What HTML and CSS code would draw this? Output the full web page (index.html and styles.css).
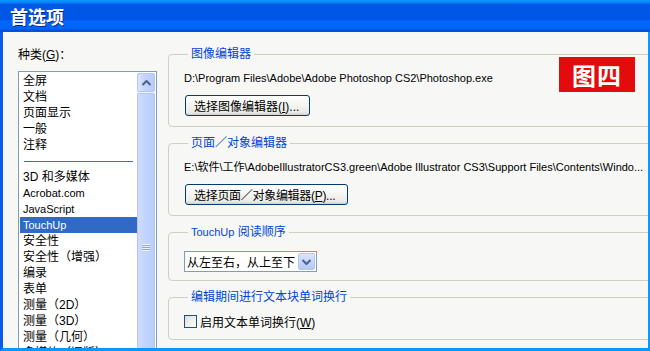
FILE: index.html
```html
<!DOCTYPE html>
<html lang="zh-CN">
<head>
    <meta charset="UTF-8">
    <meta name="viewport" content="width=device-width, initial-scale=1.0">
    <title>首选项</title>
    <link rel="stylesheet" href="styles.css">
</head>
<body>
    <div class="window">
        <div class="titlebar">首选项</div>

        <div class="frame">
            <div class="sidebar">
                <div class="caption">种类(<u>G</u>)：</div>
                <div class="listbox">
                    <ul class="items">
                        <li>全屏</li>
                        <li>文档</li>
                        <li>页面显示</li>
                        <li>一般</li>
                        <li>注释</li>
                        <li class="sep"></li>
                        <li>3D 和多媒体</li>
                        <li class="lat">Acrobat.com</li>
                        <li class="lat">JavaScript</li>
                        <li class="lat selected">TouchUp</li>
                        <li>安全性</li>
                        <li>安全性（增强）</li>
                        <li>编录</li>
                        <li>表单</li>
                        <li>测量（2D）</li>
                        <li>测量（3D）</li>
                        <li>测量（几何）</li>
                        <li>多媒体（旧版）</li>
                    </ul>
                    <div class="scrollbar">
                        <div class="sb-up">
                            <svg width="9" height="6" viewBox="0 0 9 6"><path d="M0.5 5 L4.5 1 L8.5 5" fill="none" stroke="#4d6185" stroke-width="2"/></svg>
                        </div>
                        <div class="sb-thumb">
                            <span class="grip"></span>
                        </div>
                    </div>
                </div>
            </div>

            <div class="panel">
                <fieldset class="group">
                    <legend>图像编辑器</legend>
                    <div class="path">D:\Program Files\Adobe\Adobe Photoshop CS2\Photoshop.exe</div>
                    <button class="btn w1">选择图像编辑器(<u>I</u>)...</button>
                </fieldset>

                <fieldset class="group">
                    <legend>页面／对象编辑器</legend>
                    <div class="path">E:\软件\工作\AdobeIllustratorCS3.green\Adobe Illustrator CS3\Support Files\Contents\Windo...</div>
                    <button class="btn w2">选择页面／对象编辑器(<u>P</u>)...</button>
                </fieldset>

                <fieldset class="group g3">
                    <legend><span class="lat">TouchUp</span> 阅读顺序</legend>
                    <div class="combo">
                        <span class="combo-text">从左至右，从上至下</span>
                        <span class="combo-btn">
                            <svg width="9" height="6" viewBox="0 0 9 6"><path d="M0.5 1 L4.5 5 L8.5 1" fill="none" stroke="#4d6185" stroke-width="2"/></svg>
                        </span>
                    </div>
                </fieldset>

                <fieldset class="group">
                    <legend>编辑期间进行文本块单词换行</legend>
                    <label class="check">
                        <span class="box"></span>
                        <span>启用文本单词换行(<u>W</u>)</span>
                    </label>
                </fieldset>
            </div>
        </div>

        <div class="stamp">图四</div>
    </div>
</body>
</html>
```

FILE: styles.css
```css
* {
    box-sizing: border-box;
}
body {
    margin: 0;
    font-family: "Liberation Sans", "Noto Sans CJK SC", sans-serif;
    font-size: 12px;
    color: #000;
    background: #f7f7f5;
}
.window {
    position: relative;
    width: 650px;
    height: 351px;
    display: flex;
    flex-direction: column;
    overflow: hidden;
}
.titlebar {
    height: 32px;
    flex-shrink: 0;
    padding-left: 10px;
    line-height: 33px;
    font-family: "Noto Sans CJK SC", sans-serif;
    font-size: 18px;
    font-weight: bold;
    color: #fff;
    text-shadow: 1px 1px 0 #0a2a8a;
    background: linear-gradient(to bottom, #0a97ff 0, #0a80f6 3px, #0059e7 4px, #0055e5 20px, #0066fb 21px, #0064f6 29px, #0050dc 30px, #0050dc 32px);
}
.frame {
    flex: 1;
    display: flex;
    min-height: 0;
    border-left: 3px solid #0a5ce8;
    border-right: 2px solid #0a98ff;
    border-bottom: 3px solid #0a98ff;
    background: #f7f7f5;
    overflow: hidden;
}

/* categories list */
.sidebar {
    width: 165px;
    flex-shrink: 0;
    padding: 15px 0 0 15px;
}
.caption {
    height: 16px;
    line-height: 16px;
}
.listbox {
    margin-top: 8px;
    width: 139px;
    height: 300px;
    padding: 1px;
    border: 1px solid #7f9db9;
    background: #fff;
    display: grid;
    grid-template-columns: 117px 18px;
}
.items {
    list-style: none;
    margin: 0;
    padding: 0;
}
.items li {
    height: 16px;
    line-height: 16px;
    padding-left: 3px;
    white-space: nowrap;
}
.items li.lat {
    font-size: 11px;
}
.items li.selected {
    background: #316ac5;
    color: #fff;
}
.items li.sep {
    position: relative;
}
.items li.sep::after {
    content: "";
    position: absolute;
    left: 4px;
    right: 4px;
    top: 8px;
    border-top: 1px solid #3c6bb8;
}
.scrollbar {
    display: flex;
    flex-direction: column;
    background: #eef3fe;
}
.sb-up {
    height: 19px;
    display: flex;
    align-items: center;
    justify-content: center;
    background: linear-gradient(to right, #dce6fe, #c4d4fc 40%, #b9cbfa);
    border: 1px solid #b3c7f6;
    border-radius: 2px;
}
.sb-thumb {
    flex: 1;
    margin-top: 1px;
    display: flex;
    justify-content: center;
    padding-top: 150px;
    background: linear-gradient(to right, #cfdcfd, #c4d4fd 40%, #bacdfb);
    border: 1px solid #b3c7f6;
    border-radius: 2px;
}
.grip {
    width: 8px;
    height: 7px;
    background: repeating-linear-gradient(to bottom, #eef3fe 0 1px, #8ba4e0 1px 2px);
}

/* right side groups */
.panel {
    flex: 1;
    min-width: 0;
    padding-top: 14px;
    display: flex;
    flex-direction: column;
    gap: 8px;
    overflow: hidden;
}
.group {
    margin: 0 -12px 0 0;
    padding: 0 0 10px 15px;
    border: 1px solid #d0d0bf;
    border-radius: 4px;
    min-width: 0;
}
.group legend {
    margin-left: 4px;
    padding: 0 3px;
    height: 16px;
    line-height: 16px;
    color: #0046d5;
}
.group legend .lat {
    font-size: 11px;
}
.g3 {
    padding-bottom: 8px;
}
.path {
    margin-top: 8px;
    height: 16px;
    line-height: 16px;
    font-size: 11px;
    white-space: nowrap;
    overflow: hidden;
}
.btn {
    display: block;
    margin: 9px 0 0 1px;
    height: 21px;
    padding: 0 0 0 8px;
    border: 1px solid #003c74;
    border-radius: 3px;
    background: linear-gradient(to bottom, #fff 0, #f4f4f0 50%, #ecebe6 85%, #d6d0c5 100%);
    font-family: "Liberation Sans", "Noto Sans CJK SC", sans-serif;
    font-size: 12px;
    color: #000;
    text-align: left;
    white-space: nowrap;
}
.w1 {
    width: 125px;
}
.w2 {
    width: 163px;
    letter-spacing: -0.3px;
}
.combo {
    margin-top: 11px;
    width: 133px;
    height: 21px;
    border: 1px solid #7f9db9;
    background: #fff;
    display: flex;
    align-items: center;
    padding: 0 1px 0 2px;
}
.combo-text {
    flex: 1;
    white-space: nowrap;
    overflow: hidden;
}
.combo-btn {
    width: 17px;
    height: 17px;
    display: flex;
    align-items: center;
    justify-content: center;
    background: linear-gradient(to bottom, #dbe5fd, #c1d3fb 60%, #b5c9f8);
    border: 1px solid #b3c7f6;
    border-radius: 2px;
}
.check {
    margin-top: 8px;
    height: 16px;
    display: flex;
    align-items: center;
    gap: 3px;
}
.box {
    width: 13px;
    height: 13px;
    border: 1px solid #1c5180;
    background: linear-gradient(135deg, #dcdcd7, #fff);
}

/* red caption stamp over the dialog */
.stamp {
    position: absolute;
    left: 559px;
    top: 57px;
    width: 76px;
    height: 35px;
    background: #e30b0b;
    color: #fff;
    font-family: "Noto Sans CJK SC", sans-serif;
    font-size: 24px;
    font-weight: bold;
    line-height: 35px;
    text-align: center;
    letter-spacing: 1px;
}
```
